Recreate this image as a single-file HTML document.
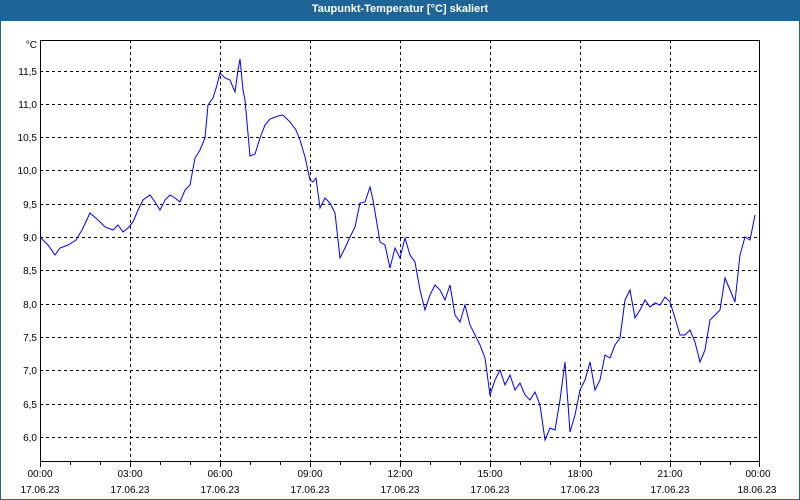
<!DOCTYPE html>
<html><head><meta charset="utf-8"><style>
body{margin:0;width:800px;height:500px;overflow:hidden;background:#fff;font-family:"Liberation Sans",sans-serif;}
#t{position:absolute;left:0;top:0;width:800px;height:21px;background:#1f6497;color:#fff;font-size:11px;font-weight:bold;text-align:center;line-height:19px;}
#f{position:absolute;left:0;top:21px;width:798px;height:478px;border:1px solid #1f6497;border-top:none;}
svg{position:absolute;left:0;top:0}
text{font-family:"Liberation Sans",sans-serif;font-size:10px;fill:#000}
</style></head><body>
<div id="t">Taupunkt-Temperatur [°C] skaliert</div>
<div id="f"></div>
<svg width="800" height="500">
<g stroke="#000" stroke-dasharray="3,3" stroke-width="1">
<line x1="130.5" y1="40" x2="130.5" y2="461"/><line x1="220.5" y1="40" x2="220.5" y2="461"/><line x1="310.5" y1="40" x2="310.5" y2="461"/><line x1="400.5" y1="40" x2="400.5" y2="461"/><line x1="490.5" y1="40" x2="490.5" y2="461"/><line x1="580.5" y1="40" x2="580.5" y2="461"/><line x1="670.5" y1="40" x2="670.5" y2="461"/>
<line x1="40" y1="71.5" x2="760" y2="71.5"/><line x1="40" y1="104.5" x2="760" y2="104.5"/><line x1="40" y1="137.5" x2="760" y2="137.5"/><line x1="40" y1="170.5" x2="760" y2="170.5"/><line x1="40" y1="204.5" x2="760" y2="204.5"/><line x1="40" y1="237.5" x2="760" y2="237.5"/><line x1="40" y1="270.5" x2="760" y2="270.5"/><line x1="40" y1="304.5" x2="760" y2="304.5"/><line x1="40" y1="337.5" x2="760" y2="337.5"/><line x1="40" y1="370.5" x2="760" y2="370.5"/><line x1="40" y1="404.5" x2="760" y2="404.5"/><line x1="40" y1="437.5" x2="760" y2="437.5"/>
</g>
<rect x="40.5" y="40.5" width="719" height="421" fill="none" stroke="#000"/>
<g stroke="#000">
<line x1="40.5" y1="461" x2="40.5" y2="467"/><line x1="70.5" y1="461" x2="70.5" y2="465"/><line x1="100.5" y1="461" x2="100.5" y2="465"/><line x1="130.5" y1="461" x2="130.5" y2="467"/><line x1="160.5" y1="461" x2="160.5" y2="465"/><line x1="190.5" y1="461" x2="190.5" y2="465"/><line x1="220.5" y1="461" x2="220.5" y2="467"/><line x1="250.5" y1="461" x2="250.5" y2="465"/><line x1="280.5" y1="461" x2="280.5" y2="465"/><line x1="310.5" y1="461" x2="310.5" y2="467"/><line x1="340.5" y1="461" x2="340.5" y2="465"/><line x1="370.5" y1="461" x2="370.5" y2="465"/><line x1="400.5" y1="461" x2="400.5" y2="467"/><line x1="430.5" y1="461" x2="430.5" y2="465"/><line x1="460.5" y1="461" x2="460.5" y2="465"/><line x1="490.5" y1="461" x2="490.5" y2="467"/><line x1="520.5" y1="461" x2="520.5" y2="465"/><line x1="550.5" y1="461" x2="550.5" y2="465"/><line x1="580.5" y1="461" x2="580.5" y2="467"/><line x1="610.5" y1="461" x2="610.5" y2="465"/><line x1="640.5" y1="461" x2="640.5" y2="465"/><line x1="670.5" y1="461" x2="670.5" y2="467"/><line x1="700.5" y1="461" x2="700.5" y2="465"/><line x1="730.5" y1="461" x2="730.5" y2="465"/><line x1="759.5" y1="461" x2="759.5" y2="467"/>
</g>
<g text-anchor="end">
<text x="37" y="48">°C</text>
<text x="37" y="75">11,5</text><text x="37" y="108">11,0</text><text x="37" y="141">10,5</text><text x="37" y="174">10,0</text><text x="37" y="208">9,5</text><text x="37" y="241">9,0</text><text x="37" y="274">8,5</text><text x="37" y="308">8,0</text><text x="37" y="341">7,5</text><text x="37" y="374">7,0</text><text x="37" y="408">6,5</text><text x="37" y="441">6,0</text>
</g>
<g text-anchor="middle">
<text x="40" y="477">00:00</text><text x="130" y="477">03:00</text><text x="220" y="477">06:00</text><text x="310" y="477">09:00</text><text x="400" y="477">12:00</text><text x="490" y="477">15:00</text><text x="580" y="477">18:00</text><text x="670" y="477">21:00</text><text x="758" y="477">00:00</text>
<text x="40" y="493">17.06.23</text><text x="130" y="493">17.06.23</text><text x="220" y="493">17.06.23</text><text x="310" y="493">17.06.23</text><text x="400" y="493">17.06.23</text><text x="490" y="493">17.06.23</text><text x="580" y="493">17.06.23</text><text x="670" y="493">17.06.23</text><text x="757" y="493">18.06.23</text>
</g>
<polyline fill="none" stroke="#0000ff" stroke-width="1" points="40,237 48,245 55,255 60,248 68,245 76,240 82,230 90,213 98,220 105,227 113,230 118,225 123,232 128,228 133,222 138,210 143,200 150,195 155,202 160,210 165,200 170,195 175,198 180,202 185,190 190,185 195,158 200,150 205,138 208,105 213,98 217,85 220,73 225,78 230,80 235,92 238,70 240,59 243,90 245,100 250,156 255,154 260,138 265,125 270,119 278,116 283,115 290,122 296,130 300,140 305,157 310,180 313,182 316,178 320,208 325,198 330,203 335,213 340,258 345,248 350,237 355,227 360,203 365,202 370,187 373,200 380,242 385,245 390,268 395,248 400,258 405,238 410,255 415,262 420,290 425,310 430,295 435,285 440,290 445,300 450,285 455,315 460,322 465,305 470,325 475,335 480,345 485,358 490,395 495,380 500,370 505,385 510,375 515,390 520,383 525,395 530,400 535,392 540,405 545,440 550,428 555,430 560,400 565,362 570,432 575,415 580,390 585,380 590,362 595,390 600,380 605,355 610,358 615,345 620,338 625,300 630,290 635,318 640,310 645,300 650,307 655,303 660,305 665,297 670,302 675,318 680,335 685,335 690,330 695,342 700,362 705,350 710,320 715,315 720,310 725,278 730,290 735,302 740,255 745,237 750,240 755,215"/>
</svg>
</body></html>
